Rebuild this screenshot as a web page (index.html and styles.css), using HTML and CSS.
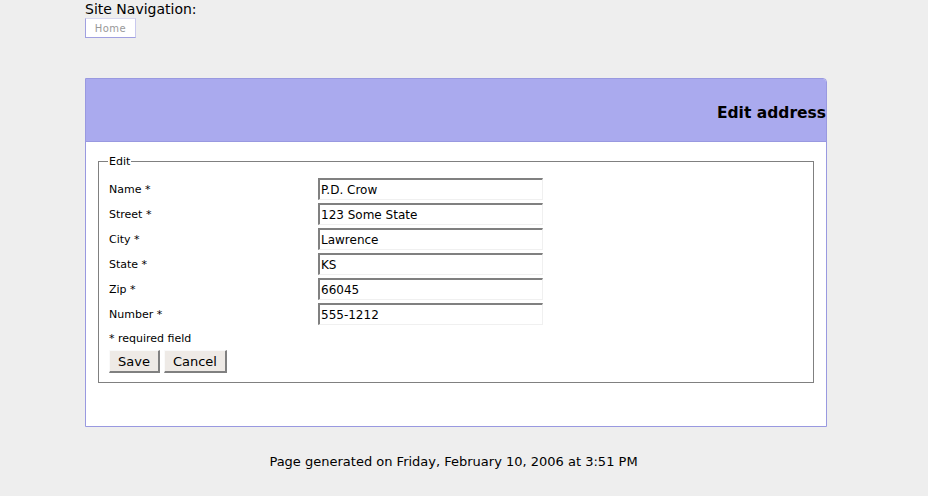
FILE: index.html
```html
<!DOCTYPE html>
<html>
<head>
<meta charset="utf-8">
<title>Edit address</title>
<link rel="stylesheet" href="styles.css">
</head>
<body>
<div class="wrap">
  <div class="nav">
    <div class="nav-title">Site Navigation:</div>
    <a class="nav-btn" href="#">Home</a>
  </div>
  <div class="panel">
    <div class="panel-head"><h1>Edit address</h1></div>
    <div class="panel-body">
      <fieldset class="edit">
        <legend>Edit</legend>
        <div class="row"><label>Name *</label><input class="field" value="P.D. Crow"></div>
        <div class="row"><label>Street *</label><input class="field" value="123 Some State"></div>
        <div class="row"><label>City *</label><input class="field" value="Lawrence"></div>
        <div class="row"><label>State *</label><input class="field" value="KS"></div>
        <div class="row"><label>Zip *</label><input class="field" value="66045"></div>
        <div class="row"><label>Number *</label><input class="field" value="555-1212"></div>
        <div class="note">* required field</div>
        <div class="buttons"><button class="btn">Save</button><button class="btn">Cancel</button></div>
      </fieldset>
    </div>
  </div>
  <div class="footer">Page generated on Friday, February 10, 2006 at 3:51 PM</div>
</div>
</body>
</html>
```
FILE: styles.css
```css
html, body {
  margin: 0;
  padding: 0;
  background: #eeeeee;
  font-family: "DejaVu Sans", "Liberation Sans", sans-serif;
  color: #000;
}
.wrap {
  margin-left: 85px;
  width: 742px;
}
.nav-title {
  font-size: 14px;
  line-height: 18px;
}
.nav-btn {
  display: block;
  box-sizing: border-box;
  width: 51px;
  height: 20px;
  padding-top: 2px;
  background: #fff;
  border: 1px solid #a0a0e0;
  border-top-color: #d8d8f0;
  border-right-color: #c8c8ee;
  color: #999;
  font-size: 10px;
  letter-spacing: 0.5px;
  text-align: center;
  line-height: 16px;
  text-decoration: none;
}
.panel {
  margin-top: 40px;
  border: 1px solid #9999e0;
  border-top-right-radius: 4px;
  background: #fff;
}
.panel-head {
  background: #aaaaee;
  height: 62px;
  border-bottom: 1px solid #9999e0;
  border-top-right-radius: 3px;
  display: flex;
  align-items: center;
  justify-content: flex-end;
}
.panel-head h1 {
  margin: 0;
  padding-top: 5px;
  font-size: 15.5px;
  font-weight: bold;
}
.panel-body {
  padding: 13px 12px 43px 12px;
}
.edit {
  margin: 0;
  border: 1px solid #808080;
  padding: 10px 10px 9px 10px;
}
.edit legend {
  font-size: 11px;
  padding: 0 1px;
  margin-left: -1px;
}
.row {
  display: grid;
  grid-template-columns: 209px 225px;
  align-items: center;
  height: 25px;
}
.row label {
  font-size: 11px;
  align-self: start;
  padding-top: 5px;
}
.field {
  box-sizing: border-box;
  width: 225px;
  height: 22px;
  margin: 0 0 3px 0;
  border-style: solid;
  border-width: 2px 1px 1px 2px;
  border-color: #808080 #f0f0f0 #f0f0f0 #808080;
  background: #fff;
  font-family: "DejaVu Sans", sans-serif;
  font-size: 12px;
  padding: 1px 0 0 1px;
  color: #000;
}
.note {
  font-size: 11px;
  padding-top: 4px;
  height: 14px;
}
.buttons {
  display: flex;
  gap: 4px;
  margin-top: 4px;
}
.btn {
  box-sizing: border-box;
  height: 23px;
  padding: 0 8px;
  background: #eeeae6;
  border-style: solid;
  border-width: 1px 2px 2px 1px;
  border-color: #fafafa #808080 #808080 #fafafa;
  font-family: "DejaVu Sans", sans-serif;
  font-size: 13px;
  color: #000;
}
.footer {
  text-align: center;
  font-size: 13px;
  margin-top: 27px;
  padding-right: 5px;
}
```
